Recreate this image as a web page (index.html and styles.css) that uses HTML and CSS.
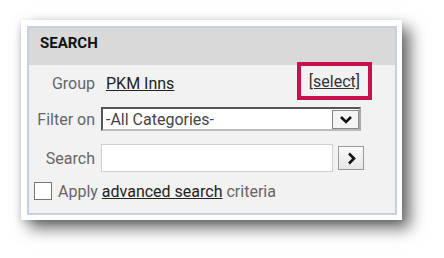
FILE: index.html
```
<html>
	<head>
		<title>Search</title>
		<link rel="stylesheet" href="styles.css">
	</head>
	<body>
		<div class="frame">
			<div class="panel">
				<div class="panel-head">SEARCH</div>
				<div class="panel-body">
					<div class="row row-group">
						<span class="label">Group</span>
						<div class="field group-field">
							<a class="group-name">PKM Inns</a>
							<span class="mark"><a class="select-link">[select]</a></span>
						</div>
					</div>
					<div class="row row-filter">
						<span class="label">Filter on</span>
						<div class="field">
							<div class="dropdown">
								<span class="dropdown-text">-All Categories-</span>
								<span class="dropdown-btn">
									<svg width="14" height="9" viewBox="0 0 14 9"><path d="M2 2 L7 7 L12 2" fill="none" stroke="#111" stroke-width="2.6"/></svg>
								</span>
							</div>
						</div>
					</div>
					<div class="row row-search">
						<span class="label">Search</span>
						<div class="field search-field">
							<div class="search-input"></div>
							<span class="go-btn">
								<svg width="9" height="13" viewBox="0 0 9 13"><path d="M2 1.5 L7 6.5 L2 11.5" fill="none" stroke="#111" stroke-width="2.6"/></svg>
							</span>
						</div>
					</div>
					<div class="row-check">
						<span class="checkbox"></span>
						<span class="check-text">Apply <a class="adv-link">advanced search</a> criteria</span>
					</div>
				</div>
			</div>
		</div>
	</body>
</html>
```
FILE: styles.css
```
* {
	margin: 0;
	padding: 0;
	box-sizing: border-box;
}

body {
	background: #fff;
	font-family: Roboto, "Liberation Sans", sans-serif;
	font-size: 16px;
}

.frame {
	width: 381px;
	height: 200px;
	margin: 20px 0 0 21px;
	padding: 6px 5px 5px 6px;
	background: #fff;
	box-shadow: 8px 8px 15px rgba(0, 0, 0, 0.6), -1px 2px 6px rgba(0, 0, 0, 0.12);
}

.panel {
	height: 100%;
	border: 2px solid #c9d1de;
	background: #f2f2f2;
	display: flex;
	flex-direction: column;
}

.panel-head {
	height: 37px;
	background: #d9d9d9;
	font-weight: bold;
	font-size: 15px;
	color: #111;
	padding: 6px 0 0 11px;
}

.panel-body {
	flex: 1;
	display: flex;
	flex-direction: column;
}

.row {
	display: grid;
	grid-template-columns: 66px 1fr;
	column-gap: 6px;
	align-items: center;
}

.label {
	text-align: right;
	color: #666;
}

.row-group {
	height: 36px;
}

.group-field {
	display: flex;
	justify-content: space-between;
	align-items: center;
	padding-left: 5px;
	padding-right: 23px;
}

.group-name,
.adv-link {
	color: #222;
	text-decoration: underline;
}

.mark {
	height: 38px;
	margin-top: -4px;
	border: 4px solid #c8104f;
	padding: 0 8px;
	display: flex;
	align-items: center;
}

.select-link {
	color: #333;
	text-decoration: underline;
}

.row-filter {
	margin-top: 6px;
	height: 24px;
}

.dropdown {
	width: 260px;
	height: 24px;
	background: #fff;
	border: 2px solid #555;
	border-right-color: #aaa;
	border-bottom-color: #bbb;
	display: flex;
	align-items: center;
	justify-content: space-between;
	padding-left: 3px;
}

.dropdown-text {
	color: #444;
}

.dropdown-btn {
	width: 27px;
	height: 19px;
	border: 1px solid #888;
	background: #f4f4f4;
	display: flex;
	align-items: center;
	justify-content: center;
}

.row-search {
	margin-top: 13px;
	height: 28px;
}

.search-field {
	display: flex;
	align-items: center;
	gap: 5px;
}

.search-input {
	width: 232px;
	height: 28px;
	background: #fff;
	border: 1px solid #d0d0d0;
}

.go-btn {
	width: 26px;
	height: 24px;
	border: 1px solid #999;
	background: linear-gradient(#fafafa, #e6e6e6);
	display: flex;
	align-items: center;
	justify-content: center;
}

.row-check {
	margin-top: 10px;
	height: 18px;
	display: flex;
	align-items: center;
	gap: 6px;
	padding-left: 5px;
}

.checkbox {
	width: 18px;
	height: 18px;
	border: 1px solid #777;
	background: #fff;
}

.check-text {
	color: #666;
}
```
